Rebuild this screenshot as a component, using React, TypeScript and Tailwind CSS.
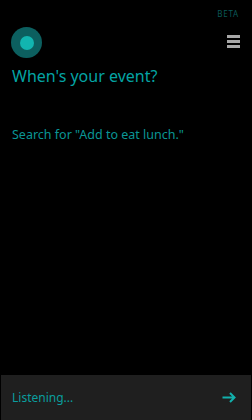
import React from 'react'

const App = () => {
    return (
        <div className="flex h-[420px] w-[252px] flex-col overflow-hidden bg-black font-['Noto_Sans',sans-serif]">
            <div className="flex justify-end pr-[13px] pt-[10px]">
                <span className="text-[8px] leading-none tracking-[0.8px] text-[#0a5858]">BETA</span>
            </div>
            <div className="mt-[9px] flex items-start justify-between pl-[11px] pr-[12px]">
                <div className="flex h-[31px] w-[31px] items-center justify-center rounded-full bg-[#0c5f5f]">
                    <div className="h-[14px] w-[14px] rounded-full bg-[#12b5b0]" />
                </div>
                <div className="mt-[8px] flex w-[13px] flex-col gap-[2px]">
                    <div className="h-[3px] bg-[#a8a8a8]" />
                    <div className="h-[3px] bg-[#a8a8a8]" />
                    <div className="h-[3px] bg-[#a8a8a8]" />
                </div>
            </div>
            <p className="mt-[8px] pl-[12px] text-[16px] leading-[20px] text-[#04a4a4]">
                When's your event?
            </p>
            <p className="mt-[41px] pl-[12px] text-[12.5px] leading-[16px] text-[#0a9696]">
                Search for "Add to eat lunch."
            </p>
            <div className="flex-1" />
            <div className="mx-px flex h-[45px] items-center justify-between bg-[#1f1f1f] pl-[11px] pr-[15px]">
                <span className="text-[12px] leading-none text-[#0a9e9e]">Listening...</span>
                <svg width="14" height="11" viewBox="0 0 14 11" fill="none">
                    <path d="M0.5 5.5H12.5M8 1L12.5 5.5L8 10" stroke="#12b0ac" strokeWidth="2" />
                </svg>
            </div>
        </div>
    )
}

export default App
